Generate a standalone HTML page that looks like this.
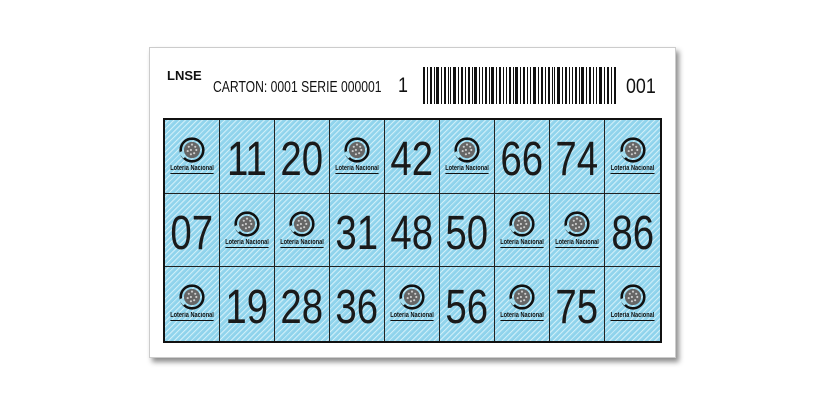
<!DOCTYPE html>
<html><head><meta charset="utf-8"><style>
body{margin:0;width:827px;height:415px;background:#fff;position:relative;overflow:hidden;font-family:"Liberation Sans",sans-serif;}
.card{position:absolute;left:149px;top:47px;width:527px;height:311px;background:#fff;border:1px solid #ccc;box-sizing:border-box;box-shadow:3px 4px 5px rgba(0,0,0,.45);}
.t{position:absolute;color:#111;white-space:nowrap;transform-origin:0 0;}
.grid{position:absolute;left:163px;top:118px;width:499px;height:225px;box-sizing:border-box;border:2px solid #111;display:grid;grid-template-columns:repeat(9,1fr);grid-template-rows:repeat(3,1fr);
background:#a4def0 repeating-linear-gradient(135deg,#8fd3ec 0 2px,#cdeef8 2px 3px,#9ad8ee 3px 4px);}
.c{border-right:1px solid #222;border-bottom:1px solid #222;display:flex;align-items:center;justify-content:center;position:relative;}
.c:nth-child(9n){border-right:none}.c:nth-child(n+19){border-bottom:none}
.n{font-size:48px;color:#1a1a1a;transform:scaleX(.8);line-height:1;margin-top:8px;font-weight:normal}
.lg{position:absolute;left:50%;top:16px;margin-left:-14px;width:28px;height:28px}
.lt{position:absolute;left:-20px;right:-20px;top:45px;text-align:center;font:bold 7px "Liberation Sans",sans-serif;color:#111;transform:scaleX(.8);}
.lt span{border-bottom:1px solid #111;padding-bottom:1px}
</style></head><body>
<div class="card"></div>
<div class="t" style="left:167px;top:68px;font:bold 13px 'Liberation Sans',sans-serif;">LNSE</div>
<div class="t" style="left:213px;top:79px;font-size:16px;transform:scaleX(.76);">CARTON: 0001 SERIE 000001</div>
<div class="t" style="left:398px;top:74px;font-size:21px;transform:scaleX(.85);">1</div>
<svg style="position:absolute;left:423px;top:67px" width="194" height="37" viewBox="0 0 194 37">
<g fill="#111">
<rect x="0" width="2" height="37"/><rect x="4" width="1" height="37"/><rect x="7" width="2" height="37"/><rect x="11" width="1" height="37"/><rect x="13" width="3" height="37"/><rect x="18" width="1" height="37"/><rect x="21" width="2" height="37"/><rect x="25" width="1" height="37"/><rect x="27" width="1" height="37"/><rect x="30" width="3" height="37"/><rect x="35" width="1" height="37"/><rect x="38" width="2" height="37"/><rect x="42" width="1" height="37"/><rect x="45" width="2" height="37"/><rect x="49" width="1" height="37"/><rect x="51" width="3" height="37"/><rect x="56" width="1" height="37"/><rect x="59" width="1" height="37"/><rect x="62" width="2" height="37"/><rect x="66" width="1" height="37"/><rect x="68" width="3" height="37"/><rect x="73" width="1" height="37"/><rect x="76" width="2" height="37"/><rect x="80" width="1" height="37"/><rect x="83" width="1" height="37"/><rect x="86" width="2" height="37"/><rect x="90" width="1" height="37"/><rect x="92" width="3" height="37"/><rect x="97" width="1" height="37"/><rect x="100" width="2" height="37"/><rect x="104" width="1" height="37"/><rect x="107" width="1" height="37"/><rect x="110" width="3" height="37"/><rect x="115" width="1" height="37"/><rect x="118" width="2" height="37"/><rect x="122" width="1" height="37"/><rect x="125" width="2" height="37"/><rect x="129" width="1" height="37"/><rect x="131" width="1" height="37"/><rect x="134" width="3" height="37"/><rect x="139" width="1" height="37"/><rect x="142" width="2" height="37"/><rect x="146" width="1" height="37"/><rect x="149" width="1" height="37"/><rect x="152" width="2" height="37"/><rect x="156" width="1" height="37"/><rect x="158" width="3" height="37"/><rect x="163" width="1" height="37"/><rect x="166" width="2" height="37"/><rect x="170" width="1" height="37"/><rect x="173" width="1" height="37"/><rect x="176" width="3" height="37"/><rect x="181" width="1" height="37"/><rect x="184" width="2" height="37"/><rect x="188" width="1" height="37"/><rect x="191" width="2" height="37"/>
</g></svg>
<div class="t" style="left:626px;top:75px;font-size:21px;transform:scaleX(.85);">001</div>
<div class="grid" id="g"></div>
<script>
var d=["L","11","20","L","42","L","66","74","L","07","L","L","31","48","50","L","L","86","L","19","28","36","L","56","L","75","L"];
var logo='<svg class="lg" viewBox="0 0 26 26"><circle cx="13" cy="13" r="10.5" fill="none" stroke="#111" stroke-width="2.4"/><circle cx="13" cy="13" r="7.5" fill="#666"/><g fill="#ccc"><circle cx="10" cy="10" r="1"/><circle cx="13" cy="8" r="1"/><circle cx="16" cy="10" r="1"/><circle cx="17" cy="13" r="1"/><circle cx="12" cy="13" r="1"/><circle cx="15" cy="16" r="1"/><circle cx="9" cy="14" r="1"/><circle cx="12" cy="17" r="1"/></g><path d="M2 15 L6 20" stroke="#a4def0" stroke-width="3"/></svg><div class="lt"><span>Lotería Nacional</span></div>';
var h="";d.forEach(function(v){h+='<div class="c">'+(v=="L"?logo:'<span class="n">'+v+'</span>')+'</div>';});
document.getElementById("g").innerHTML=h;
</script>
</body></html>
